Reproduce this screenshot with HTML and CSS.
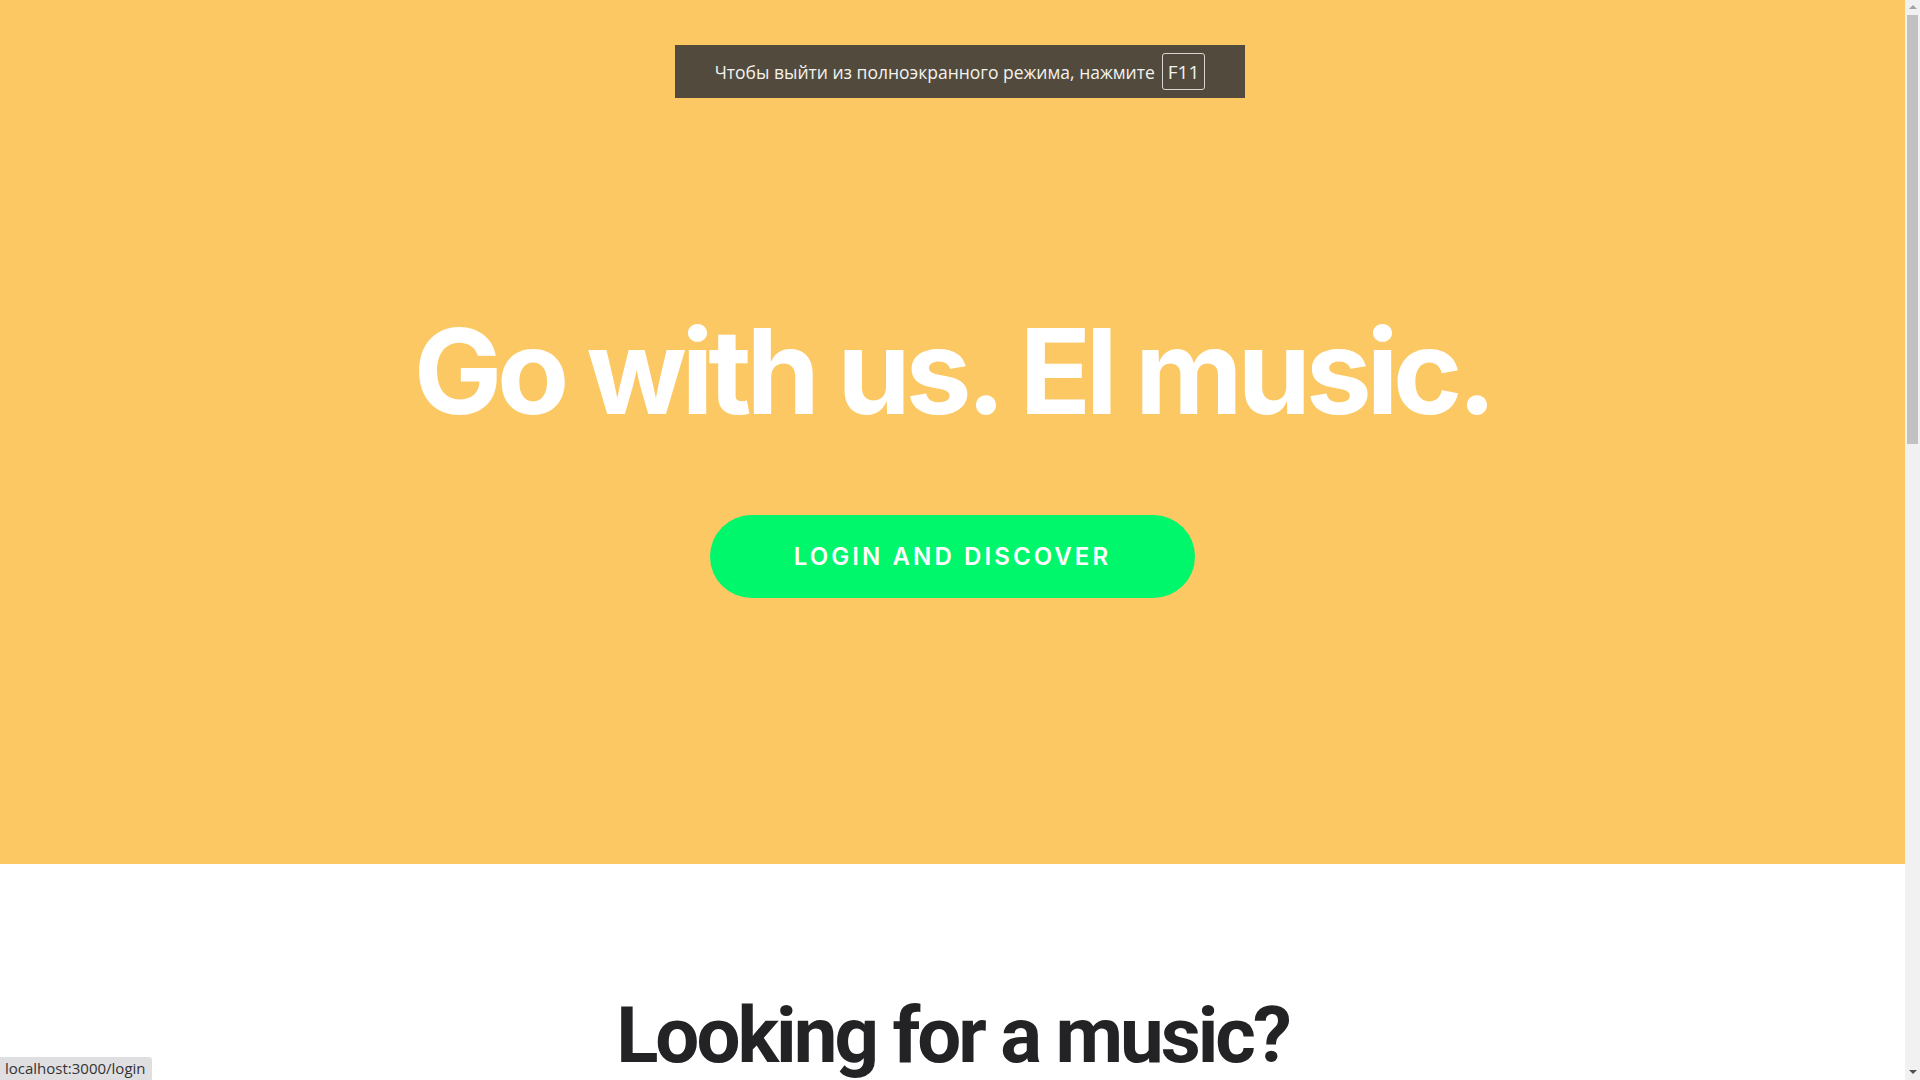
FILE: index.html
```html
<!DOCTYPE html>
<html lang="en">
<head>
<meta charset="utf-8">
<title>El music</title>
<link rel="stylesheet" href="styles.css">
</head>
<body>
<div class="page">
  <main class="content">
    <section class="hero">
      <h1 class="hero-title">Go with us. El music.</h1>
      <a class="cta" href="/login">LOGIN AND DISCOVER</a>
    </section>
    <section class="search">
      <h2 class="search-title">Looking for a music?</h2>
    </section>
  </main>
  <div class="scrollbar">
    <div class="sb-arrow sb-up"></div>
    <div class="sb-track"><div class="sb-thumb"></div></div>
    <div class="sb-arrow sb-down"></div>
  </div>
</div>
<div class="fs-notice">Чтобы выйти из полноэкранного режима, нажмите <span class="key">F11</span></div>
<div class="status">localhost:3000/login</div>
</body>
</html>
```
FILE: styles.css
```css
html, body {
  margin: 0;
  padding: 0;
  height: 100%;
  overflow: hidden;
}
body {
  font-family: "Inter", "Liberation Sans", sans-serif;
  background: #fff;
}
.page {
  display: flex;
  height: 1080px;
}
.content {
  flex: 1;
  min-width: 0;
}
.hero {
  height: 864px;
  box-sizing: border-box;
  background: #fbc863;
  display: flex;
  flex-direction: column;
  align-items: center;
  padding-top: 300px;
}
.hero-title {
  margin: 0;
  font-size: 118px;
  line-height: 142px;
  font-weight: 700;
  letter-spacing: -5.3px;
  color: #fff;
  white-space: nowrap;
}
.cta {
  margin-top: 73px;
  width: 485px;
  height: 83px;
  border-radius: 42px;
  background: #00f76c;
  color: #fff;
  text-decoration: none;
  display: flex;
  align-items: center;
  justify-content: center;
  font-size: 24px;
  font-weight: 600;
  letter-spacing: 3.1px;
}
.search {
  display: flex;
  justify-content: center;
  padding-top: 125px;
}
.search-title {
  margin: 0;
  font-family: "Roboto", "Inter", sans-serif;
  font-size: 78px;
  line-height: 94px;
  font-weight: 700;
  letter-spacing: -3px;
  color: #232326;
  white-space: nowrap;
}
.scrollbar {
  width: 15px;
  flex: none;
  background: #f1f1f1;
  display: flex;
  flex-direction: column;
  align-items: center;
}
.sb-arrow {
  width: 0;
  height: 0;
  border-left: 4px solid transparent;
  border-right: 4px solid transparent;
}
.sb-up {
  margin-top: 5px;
  border-bottom: 4px solid #a3a3a3;
}
.sb-down {
  margin-bottom: 6px;
  border-top: 4px solid #505050;
}
.sb-track {
  flex: 1;
  width: 100%;
  padding-top: 6px;
  box-sizing: border-box;
  display: flex;
  justify-content: center;
}
.sb-thumb {
  width: 11px;
  height: 429px;
  background: #c1c1c1;
}
.fs-notice {
  position: fixed;
  left: 675px;
  top: 45px;
  width: 570px;
  height: 53px;
  box-sizing: border-box;
  background: #524b3d;
  color: #f4f2ee;
  font-family: "Open Sans", "DejaVu Sans", sans-serif;
  font-size: 17.5px;
  display: flex;
  align-items: center;
  justify-content: center;
  gap: 7px;
  white-space: nowrap;
}
.key {
  border: 1px solid #d8d6d2;
  border-radius: 3px;
  padding: 0 5px;
  height: 37px;
  box-sizing: border-box;
  display: inline-flex;
  align-items: center;
  font-size: 19px;
}
.status {
  position: fixed;
  left: 0;
  bottom: 0;
  height: 23px;
  padding: 0 6px 0 5px;
  background: #dfdfe2;
  border-top-right-radius: 3px;
  color: #333;
  font-family: "Open Sans", "DejaVu Sans", sans-serif;
  font-size: 15px;
  line-height: 23px;
}
```
